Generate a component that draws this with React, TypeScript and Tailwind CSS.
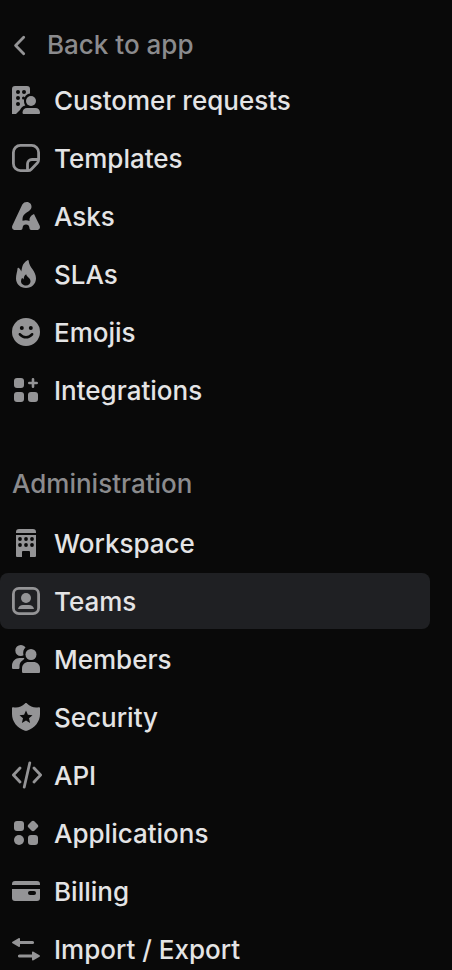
import React, { useState } from 'react';

interface IconProps {
  children: React.ReactNode;
}

const Icon: React.FC<IconProps> = ({ children }) => (
  <svg
    viewBox="0 0 28 28"
    className="w-7 h-7 shrink-0 overflow-visible fill-[#949496]"
    aria-hidden="true"
  >
    {children}
  </svg>
);

const cut = 'fill-[#090909]';
const line = 'fill-none stroke-[#949496]';

const CustomerIcon = () => (
  <Icon>
    <path d="M3 0H15a3 3 0 0 1 3 3V7.600C14.500 8 12 11 12 15c0 1.800.5 3.200 1.300 4.400C11 20 8.800 21.500 8 24L4 28H0V3a3 3 0 0 1 3-3Z" />
    <g className={cut}>
      <circle cx="6" cy="6" r="2" />
      <circle cx="12" cy="6" r="2" />
      <circle cx="6" cy="12" r="2" />
      <circle cx="11.500" cy="12" r="1.500" />
      <circle cx="6" cy="18" r="2" />
    </g>
    <circle cx="19" cy="15" r="5" />
    <path d="M15 22H23.500C26 22 28 24 28 26.500 28 27.500 27.500 28 26.500 28H12C11 28 10.500 27.500 10.500 26.500 10.500 24 12.500 22 15 22Z" />
  </Icon>
);

const TemplatesIcon = () => (
  <Icon>
    <path
      className={line}
      strokeWidth="2.8"
      strokeLinejoin="round"
      d="M16 26.600H8.400A7 7 0 0 1 1.400 19.600V8.400A7 7 0 0 1 8.400 1.400H19.600A7 7 0 0 1 26.600 8.400V15.500C26.600 17 26.300 18 25.300 19L19.300 25.200C18.300 26.300 17.300 26.600 16 26.600ZM26.500 15.500H20A4.500 4.500 0 0 0 15.500 20V26.500"
    />
  </Icon>
);

const AsksIcon = () => (
  <Icon>
    <path d="M10.300 2.500C11.500.8 12.800 0 14.800 0 17.800 0 19.800 2.300 19.500 5.200 19.200 7.500 17.500 8.700 15 10.200 12 12 10.500 14 10.500 17V18.700C12.500 17.900 15.500 17.900 17.500 19 17 16 18.500 13.500 22 12L27.600 23.500C28.600 25.800 27.500 28 25 28H19.300C18 28 17.700 27.500 17.500 26.300 17.200 23.300 16 22.500 14 22.500S10.800 23.300 10.500 26.300C10.300 27.500 10 28 8.700 28H3C.5 28-.6 25.800.4 23.500Z" />
  </Icon>
);

const FlameIcon = () => (
  <Icon>
    <path d="M15.500.2C16.300-.2 16.600.2 16.700 1 17.200 7.500 24 11 24 18.300 24 24 19.700 28 14 28S4 24 4 18.500C4 14.500 5.300 12 5.500 8.500 5.500 7.700 6.200 7.500 6.800 8 8.200 9 8.800 10.200 9.200 11.500 10.300 8 9.800 3.500 15.500.2Z" />
    <path
      className={cut}
      d="M14.200 14.300C14.500 17 18.500 18 18.500 21.200 18.500 23.500 16.600 25.500 14 25.500S9 23.600 9 21.200C9 20 9.400 19 10 18 10.700 18.300 11.200 18.800 11.500 19.500 12 17.500 12 15.500 14.200 14.300Z"
    />
  </Icon>
);

const SmileIcon = () => (
  <Icon>
    <circle cx="14" cy="14" r="14" />
    <g className={cut}>
      <circle cx="9.800" cy="10" r="2" />
      <circle cx="18.800" cy="10" r="2" />
      <path d="M7 15.300C8 14.500 8.800 15.200 9.500 16 11.800 18.500 16.200 18.500 18.500 16 19.200 15.200 20 14.500 21 15.300 21.700 16 21.400 16.800 20.800 17.500 17.300 21.600 10.700 21.600 7.200 17.500 6.600 16.800 6.300 16 7 15.300Z" />
    </g>
  </Icon>
);

const IntegrationsIcon = () => (
  <Icon>
    <rect x="2" y="2" width="10" height="10" rx="3" />
    <rect x="2" y="16" width="10" height="10" rx="3" />
    <rect x="16" y="16" width="10" height="10" rx="3" />
    <path className={line} strokeWidth="2.6" strokeLinecap="round" d="M21 3.300V10.700M17.300 7H24.700" />
  </Icon>
);

const WorkspaceIcon = () => (
  <Icon>
    <path d="M7 0H21a3 3 0 0 1 3 3V4H4V3a3 3 0 0 1 3-3ZM4 6H24V27a1 1 0 0 1-1 1H18V23a1 1 0 0 0-1-1H11a1 1 0 0 0-1 1V28H5a1 1 0 0 1-1-1Z" />
    <g className={cut}>
      <circle cx="8" cy="10" r="1.900" />
      <circle cx="14" cy="10" r="1.900" />
      <circle cx="20" cy="10" r="1.900" />
      <circle cx="8" cy="16" r="1.900" />
      <circle cx="14" cy="16" r="1.900" />
      <circle cx="20" cy="16" r="1.900" />
    </g>
  </Icon>
);

const TeamsIcon = () => (
  <Icon>
    <rect className={line} strokeWidth="2.8" x="1.4" y="1.4" width="25.200" height="25.200" rx="5.500" />
    <circle cx="14" cy="11" r="5" />
    <path d="M6 22C6.500 19.300 8.500 18 11 18H17C19.500 18 21.500 19.300 22 22Z" />
  </Icon>
);

const MembersIcon = () => (
  <Icon>
    <path d="M8.800 0C10.800 0 12.500.9 13.500 2.500 11.500 4.200 10.700 7 11.500 10.200 10.700 10.700 9.800 11 8.800 11A5.500 5.500 0 0 1 8.800 0Z" />
    <path d="M7.500 13H11.500C12.300 13 12.500 13.600 12 14.100L11.400 14.700C9 16 7.500 18.300 7.500 21V22.500C7.500 23.500 7 24 6 24H1.500C.5 24 0 23.500 0 22.500V20.500C0 16.500 3.500 13 7.500 13Z" />
    <circle cx="19" cy="9.500" r="5.500" />
    <path d="M16.500 17H21.500C25 17 28 19.500 28 23.500V26.500C28 27.500 27.500 28 26.500 28H11.500C10.500 28 10 27.500 10 26.500V23.500C10 19.500 13 17 16.500 17Z" />
  </Icon>
);

const SecurityIcon = () => (
  <Icon>
    <path d="M13 .5C13.600-.1 14.400-.1 15 .5 18.500 4 22.500 5 26.800 4.200 27.500 4 28 4.500 28 5.200V11C28 18.500 23 25 15 27.800 14.300 28 13.700 28 13 27.800 5 25 0 18.500 0 11V5.200C0 4.500.5 4 1.200 4.200 5.500 5 9.500 4 13 .5Z" />
    <path
      className={cut}
      d="M14 7.500 15.900 11.800 20.500 12.300 17 15.300 18.100 20 14 17.500 9.900 20 11 15.300 7.500 12.300 12.100 11.800Z"
    />
  </Icon>
);

const ApiIcon = () => (
  <Icon>
    <path
      className={line}
      strokeWidth="2.8"
      strokeLinecap="round"
      strokeLinejoin="round"
      d="M8 7 1.400 14 8 21M17.800 1.800 12.200 26.200M22 7 28.600 14 22 21"
    />
  </Icon>
);

const ApplicationsIcon = () => (
  <Icon>
    <rect x="2" y="2" width="10" height="10" rx="3" />
    <path d="M19.400 2.500C20.400 1.500 21.600 1.500 22.600 2.500L25.500 5.400C26.500 6.400 26.500 7.600 25.500 8.600L22.600 11.500C21.600 12.500 20.400 12.500 19.400 11.500L16.500 8.600C15.500 7.600 15.500 6.400 16.500 5.400Z" />
    <circle cx="7" cy="21" r="5" />
    <rect x="16" y="16" width="10" height="10" rx="3" />
  </Icon>
);

const BillingIcon = () => (
  <Icon>
    <path d="M3 4H25a3 3 0 0 1 3 3V8H0V7a3 3 0 0 1 3-3ZM0 12H28V21a3 3 0 0 1-3 3H3a3 3 0 0 1-3-3Z" />
    <rect className={cut} x="16" y="14" width="8" height="4" rx="2" />
  </Icon>
);

const ImportIcon = () => (
  <Icon>
    <path className={line} strokeWidth="3.2" strokeLinecap="round" d="M6 7.500H20.500M7.500 21H22" />
    <path d="M.5 6.700 6.500 3.200C7.500 2.700 8 3 8 4V11C8 12 7.500 12.300 6.500 11.800L.5 8.300C-.1 7.900-.1 7.100.5 6.700ZM27.500 20.200 21.500 16.700C20.500 16.200 20 16.500 20 17.500V24.500C20 25.500 20.500 25.800 21.500 25.300L27.500 21.800C28.100 21.400 28.100 20.600 27.500 20.200Z" />
  </Icon>
);

interface NavItem {
  label: string;
  icon: React.FC;
}

const featureItems: NavItem[] = [
  { label: 'Customer requests', icon: CustomerIcon },
  { label: 'Templates', icon: TemplatesIcon },
  { label: 'Asks', icon: AsksIcon },
  { label: 'SLAs', icon: FlameIcon },
  { label: 'Emojis', icon: SmileIcon },
  { label: 'Integrations', icon: IntegrationsIcon },
];

const adminItems: NavItem[] = [
  { label: 'Workspace', icon: WorkspaceIcon },
  { label: 'Teams', icon: TeamsIcon },
  { label: 'Members', icon: MembersIcon },
  { label: 'Security', icon: SecurityIcon },
  { label: 'API', icon: ApiIcon },
  { label: 'Applications', icon: ApplicationsIcon },
  { label: 'Billing', icon: BillingIcon },
  { label: 'Import / Export', icon: ImportIcon },
];

interface NavListProps {
  items: NavItem[];
  active: string;
  onSelect: (label: string) => void;
}

const NavList: React.FC<NavListProps> = ({ items, active, onSelect }) => (
  <ul className="flex flex-col gap-0.5">
    {items.map(({ label, icon: ItemIcon }) => (
      <li key={label}>
        <a
          href="#"
          aria-current={label === active ? 'page' : undefined}
          onClick={e => {
            e.preventDefault();
            onSelect(label);
          }}
          className={`flex items-center gap-3.5 h-14 px-3 rounded-lg text-[26px] leading-8 font-medium text-[#e4e4e5] ${
            label === active ? 'bg-[#1f2023]' : ''
          }`}
        >
          <ItemIcon />
          <span className="pt-0.5">{label}</span>
        </a>
      </li>
    ))}
  </ul>
);

const App: React.FC = () => {
  const [active, setActive] = useState('Teams');

  return (
    <div className="h-screen overflow-hidden bg-[#090909] font-['Inter',sans-serif]">
      <nav className="flex flex-col pt-4 pr-[22px]">
        <a
          href="#"
          className="flex items-center gap-5 h-14 px-3 text-[26px] leading-8 font-medium text-[#8b8b8d]"
        >
          <svg viewBox="0 0 15 28" className="w-[15px] h-7 shrink-0" aria-hidden="true">
            <path
              className={line}
              strokeWidth="2.8"
              strokeLinecap="round"
              strokeLinejoin="round"
              d="M11.700 7.300 3.600 15.500 11.700 23.700"
            />
          </svg>
          <span className="pt-0.5">Back to app</span>
        </a>
        <NavList items={featureItems} active={active} onSelect={setActive} />
        <h2 className="mt-[50px] mb-[15px] px-3 text-[26px] leading-8 font-medium text-[#8b8b8d]">
          Administration
        </h2>
        <NavList items={adminItems} active={active} onSelect={setActive} />
      </nav>
    </div>
  );
};

export default App;
